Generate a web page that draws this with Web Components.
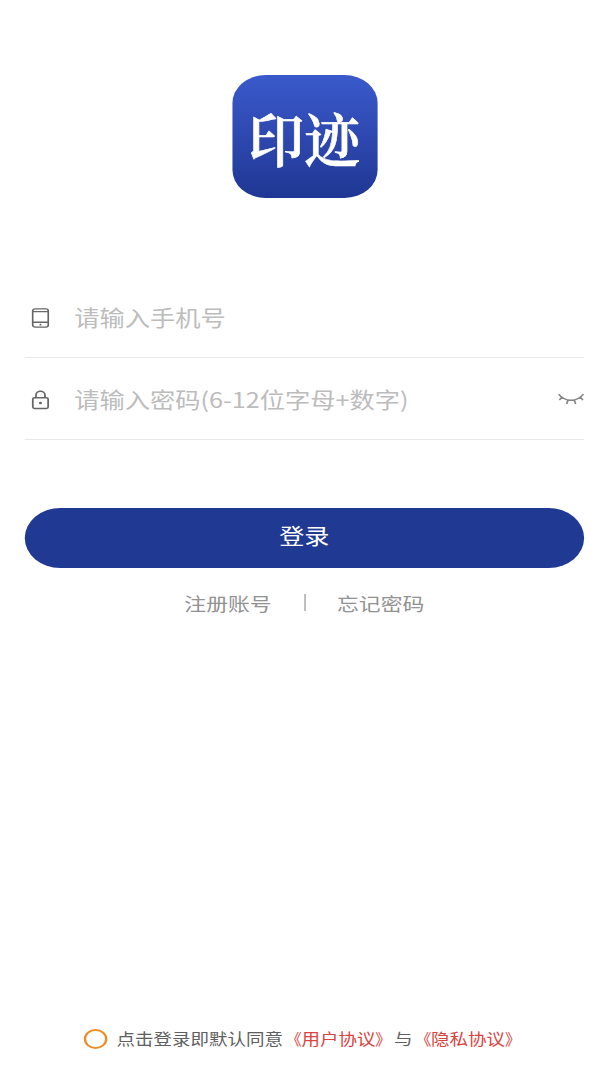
<!DOCTYPE html>
<html lang="zh-CN">
<head>
<meta charset="utf-8">
<title>印迹 登录</title>
<style>
html,body{margin:0;height:100%;overflow:hidden;background:#fff}
body{font-family:"Noto Sans CJK SC","Noto Sans",sans-serif}
</style>
</head>
<body>
<login-page></login-page>
<script>
const define = (name, html) => customElements.define(name, class extends HTMLElement {
  constructor() {
    super();
    this.attachShadow({mode: 'open'}).innerHTML = html;
  }
});

define('app-logo', `<style>
:host{display:flex;align-items:center;justify-content:center;width:123px;height:123px;border-radius:28px;
background:linear-gradient(#3a5acb,#2e48b0 50%,#1f3793);color:#fff;font:600 47.4px/60px "Noto Serif CJK SC","Source Han Serif SC","Noto Sans CJK SC",serif}
span{display:block;white-space:nowrap;-webkit-text-stroke:.5px #fff;transform:translate(-.5px,0) scaleY(1.23)}
</style><span><slot></slot></span>`);

define('input-row', `<style>
:host{display:flex;align-items:center;box-sizing:border-box;height:82px;border-bottom:1.5px solid #e9e9e9;
color:#bcbcbc;font-size:21.4px;line-height:32px;white-space:nowrap}
.icon{display:flex;width:14.6px;margin-left:5.9px;margin-right:21.2px;padding-top:2px}
.text{flex:1}
::slotted(svg){display:block;overflow:visible}
</style><span class="icon"><slot name="icon"></slot></span><span class="text"><slot></slot></span><slot name="end"></slot>`);

define('primary-button', `<style>
:host{display:flex;justify-content:center;height:60px;border-radius:30px;background:#203a94;color:#fff;
font-size:21.3px;line-height:54px}
</style><slot></slot>`);

define('account-links', `<style>
:host{display:flex;justify-content:center;align-items:center;height:30px;color:#929292;font-size:18.5px;line-height:30px}
i{width:1.3px;height:17px;background:#929292;margin:0 26.2px 2px 27.9px}
</style><slot name="register"></slot><i></i><slot name="forgot"></slot>`);

define('agreement-bar', `<style>
:host{display:flex;align-items:center;justify-content:center;height:30px;color:#606060;font-size:15.7px;line-height:30px;white-space:nowrap}
i{box-sizing:border-box;width:20px;height:20px;border:2px solid #eb8e27;border-radius:50%;margin-right:7.6px}
</style><i></i><slot></slot>`);

define('doc-link', `<style>
:host{display:inline-flex;color:#d9443f}
.open,.close{display:block;transform:scaleX(.86);transform-origin:100% 50%}
.close{transform-origin:0 50%}
</style><span class="open">《</span><slot></slot><span class="close">》</span>`);

define('login-page', `<style>
:host{display:flex;flex-direction:column;box-sizing:border-box;width:514.4px;height:1080px;padding:75px 19.9px 26px 21.3px;
transform:scaleX(1.18);transform-origin:0 0}
app-logo{align-self:center;margin-bottom:78px;margin-left:1px}
primary-button{margin-top:68px}
account-links{margin-top:20px}
agreement-bar{margin-top:auto;margin-right:1px}
</style>
<app-logo>印迹</app-logo>
<input-row>
<svg slot="icon" width="14.6" height="20" viewBox="0 0 14.6 20" fill="none" stroke="#666" stroke-width="1.4"><rect x=".7" y=".9" width="13.2" height="18.2" rx="2"/><path d="M.7 3.6H13.9M.7 14.3H13.9"/><circle cx="7.3" cy="16.7" r=".9" fill="#666" stroke="none"/></svg>
请输入手机号</input-row>
<input-row>
<svg slot="icon" width="14.6" height="20" viewBox="0 0 14.6 20" fill="none" stroke="#666" stroke-width="1.5"><rect x=".8" y="7.8" width="13" height="10.7" rx="1.4"/><path d="M3.5 7.8V5.3C3.5-.1 11.1-.1 11.1 5.3V7.8"/><circle cx="7.3" cy="13" r="1.3" fill="#666" stroke="none"/></svg>
请输入密码(6-12位字母+数字)
<svg slot="end" width="22" height="14" viewBox="0 0 22 14" fill="none" stroke="#858585" stroke-width="1.4"><path d="M.5 2.1C5.6 10.2 16.3 10.2 21.4 2.1M3.2 5L1.1 8.2M8.3 8L7.3 12M13.7 8L14.8 12M18.8 5L21 8.2"/></svg>
</input-row>
<primary-button>登录</primary-button>
<account-links><span slot="register">注册账号</span><span slot="forgot">忘记密码</span></account-links>
<agreement-bar>点击登录即默认同意<doc-link>用户协议</doc-link>与<doc-link>隐私协议</doc-link></agreement-bar>`);
</script>
</body>
</html>
